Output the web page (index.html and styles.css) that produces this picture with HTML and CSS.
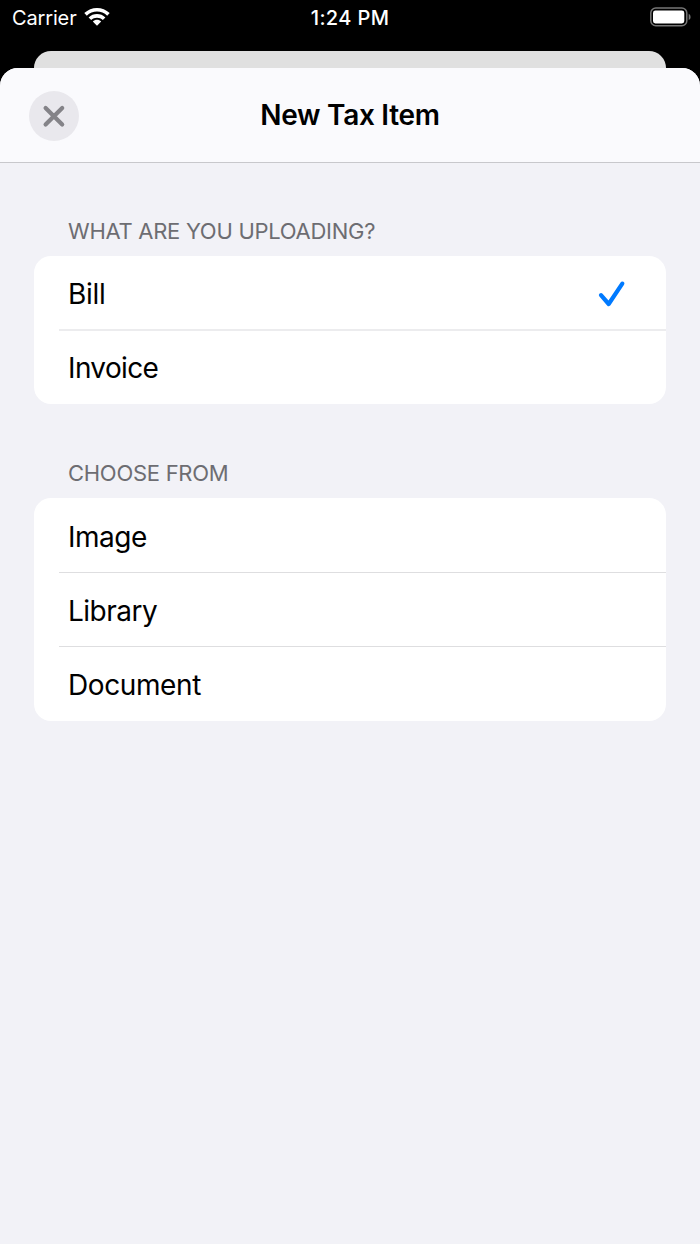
FILE: index.html
```html
<!DOCTYPE html>
<html lang="en">
<head>
<meta charset="utf-8">
<title>New Tax Item</title>
<link rel="stylesheet" href="styles.css">
</head>
<body>
<div class="status">
  <div class="status-left">
    <span class="carrier">Carrier</span>
    <svg class="wifi" width="26" height="20" viewBox="0 0 26 20">
      <path d="M0.3 6.1C7.2-.8 18.8-.8 25.7 6.1L23.2 8.7C17.6 3.2 8.4 3.2 2.8 8.7Z"/>
      <path d="M4.6 10.4C9.2 5.9 16.8 5.9 21.4 10.4L18.8 13C15.6 9.9 10.4 9.9 7.2 13Z"/>
      <path d="M8.8 14.5C11.1 12.3 14.9 12.3 17.2 14.5L13 18.8Z"/>
    </svg>
  </div>
  <span class="time">1:24 PM</span>
  <svg class="battery" width="41" height="20" viewBox="0 0 41 20">
    <rect x=".8" y="1" width="36" height="17.8" rx="5" fill="none" stroke="#767676" stroke-width="1.5"/>
    <rect x="3" y="3.6" width="31.3" height="12.8" rx="2.4" fill="#fff"/>
    <path d="M38.7 6.8Q40.6 7.7 40.6 9.9T38.7 13Z" fill="#767676"/>
  </svg>
</div>
<div class="behind"></div>
<div class="sheet">
  <header class="nav">
    <button class="close" aria-label="Close">
      <svg width="50" height="50" viewBox="0 0 50 50"><path d="M16.6 16.9L33.2 33.5M33.2 16.9L16.6 33.5"/></svg>
    </button>
    <h1 class="title">New Tax Item</h1>
  </header>
  <section class="group">
    <h2 class="label">WHAT ARE YOU UPLOADING?</h2>
    <ul class="list list-type">
      <li class="row"><span class="bill">Bill</span>
        <svg class="check" width="28" height="28" viewBox="0 0 28 28"><path d="M3 15.2L10.7 24L24.3 3.6"/></svg>
      </li>
      <li class="row"><span class="invoice">Invoice</span></li>
    </ul>
  </section>
  <section class="group group-source">
    <h2 class="label">CHOOSE FROM</h2>
    <ul class="list">
      <li class="row"><span class="image">Image</span></li>
      <li class="row"><span class="library">Library</span></li>
      <li class="row"><span class="document">Document</span></li>
    </ul>
  </section>
</div>
</body>
</html>
```
FILE: styles.css
```css
* { box-sizing: border-box; }
body {
  margin: 0;
  height: 1244px;
  overflow: hidden;
  background: #000;
  color: #000;
  font-family: Inter, "Liberation Sans", sans-serif;
  display: flex;
  flex-direction: column;
}
.status {
  height: 51px;
  padding: 7px 9px 0 12px;
  display: grid;
  grid-template-columns: 1fr auto 1fr;
  align-items: start;
  color: #fff;
  font-size: 20px;
  line-height: 22px;
}
.status-left { display: flex; gap: 7px; }
.carrier { letter-spacing: -.15px; }
.wifi { fill: #fff; }
.time { font-weight: 500; letter-spacing: .38px; margin-right: 3px; }
.battery { justify-self: end; }
.behind {
  height: 17px;
  margin: 0 34px;
  border-radius: 17px 17px 0 0;
  background: #e0e0e0;
}
.sheet {
  flex: 1;
  border-radius: 18px 18px 0 0;
  background: #f2f2f7;
  overflow: hidden;
}
.nav {
  height: 95px;
  padding: 0 29px;
  display: grid;
  grid-template-columns: 50px 1fr 50px;
  align-items: center;
  background: #fafafd;
  border-bottom: 1px solid #c8c8cc;
}
.close {
  width: 50px;
  height: 50px;
  margin-top: 2px;
  padding: 0;
  border: 0;
  border-radius: 50%;
  background: #e9e8ed;
}
.close svg { display: block; fill: none; stroke: #848388; stroke-width: 4.2; stroke-linecap: round; }
.title {
  margin: 0;
  text-align: center;
  font-size: 28px;
  line-height: 34px;
  font-weight: 600;
  letter-spacing: -.3px;
}
.group { padding: 54px 34px 0; }
.group-source { padding-top: 55px; }
.label {
  margin: 0;
  height: 39px;
  padding-left: 34px;
  font-size: 22px;
  line-height: 28px;
  font-weight: 400;
  letter-spacing: -.28px;
  color: #6d6d72;
}
.list {
  margin: 0;
  padding: 0;
  list-style: none;
  background: #fff;
  border-radius: 17px;
}
.row {
  height: 74.2px;
  padding: 2px 40px 0 9px;
  margin-left: 25px;
  display: flex;
  align-items: center;
  justify-content: space-between;
  font-size: 28px;
}
.row:first-child { height: 73.6px; padding-top: 3px; }
.row + .row { border-top: 1px solid #dedee0; }
.row:last-child { height: 74.8px; }
.list-type .row:first-child { height: 73px; }
.list-type .row + .row { height: 75.4px; border-top: 2px solid #ececee; padding-top: 1px; }
.bill { letter-spacing: -.3px; }
.invoice { letter-spacing: -.64px; }
.image { letter-spacing: -.5px; }
.library { letter-spacing: -.5px; }
.document { letter-spacing: -.4px; }
.check { fill: none; stroke: #007aff; stroke-width: 4.2; stroke-linecap: round; stroke-linejoin: round; }
```
